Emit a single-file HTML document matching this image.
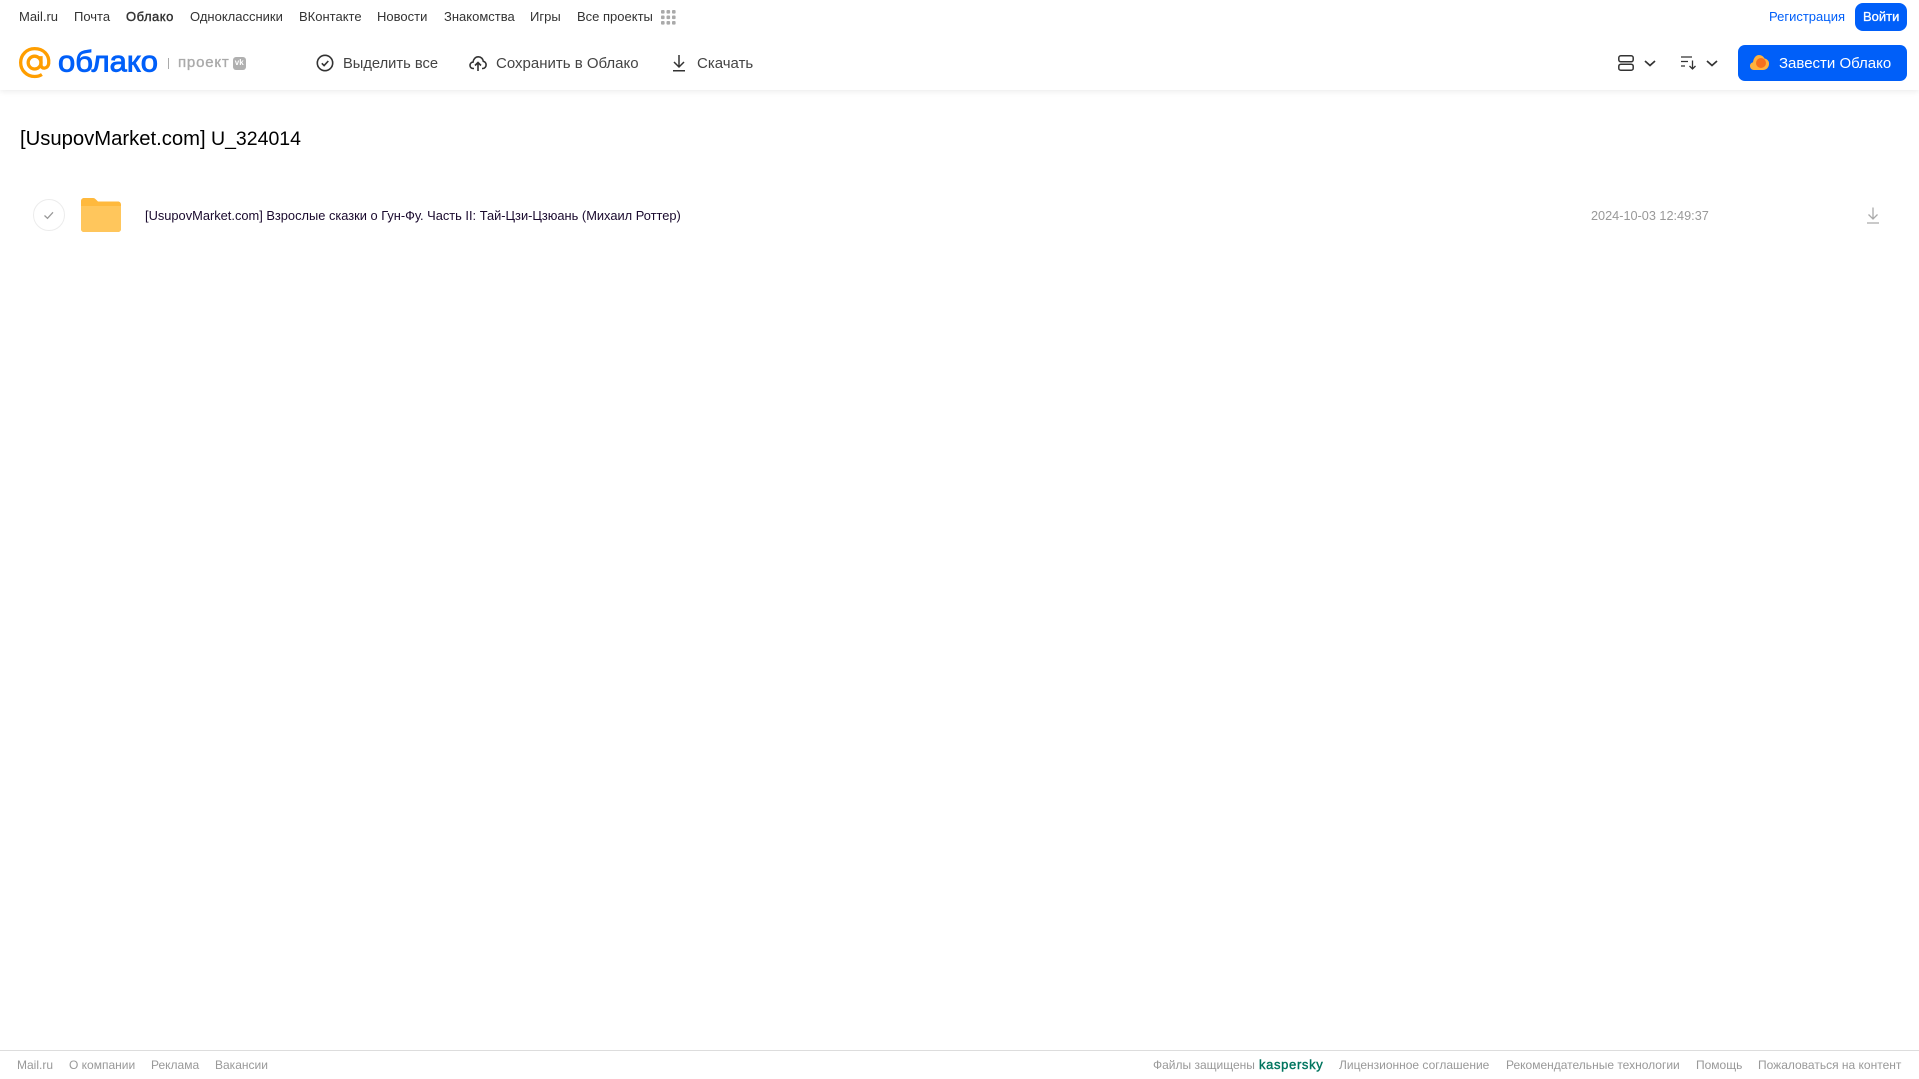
<!DOCTYPE html>
<html lang="ru"><head><meta charset="utf-8"><title>Облако</title>
<style>
html,body{margin:0;padding:0;width:1919px;height:1079px;overflow:hidden;background:#fff;font-family:"Liberation Sans",Arial,sans-serif}
.t{position:absolute;white-space:nowrap;line-height:20px}
.n{top:7px;font-size:13px;color:#333}
.b{top:53.500px;font-size:15px;color:#444;line-height:20px}
.f{top:1055px;font-size:12px;color:#999}
svg{position:absolute;overflow:visible}
#hdr{position:absolute;left:0;top:0;width:1919px;height:90px;background:#fff;box-shadow:0 1px 6px rgba(0,0,0,.09)}
</style></head><body>
<div id="hdr"></div>
<span class="t n" style="left:19px">Mail.ru</span>
<span class="t n" style="left:74px">Почта</span>
<span class="t n" style="left:126px;-webkit-text-stroke:.4px #333;letter-spacing:.5px">Облако</span>
<span class="t n" style="left:190px">Одноклассники</span>
<span class="t n" style="left:299px">ВКонтакте</span>
<span class="t n" style="left:377px">Новости</span>
<span class="t n" style="left:444px">Знакомства</span>
<span class="t n" style="left:530px">Игры</span>
<span class="t n" style="left:577px">Все проекты</span>
<svg style="left:661px;top:10px" width="15" height="15" fill="#aaa"><rect width="3.6" height="3.6" rx="1"/><rect x="5.5" width="3.6" height="3.6" rx="1"/><rect x="11" width="3.6" height="3.6" rx="1"/><rect y="5.5" width="3.6" height="3.6" rx="1"/><rect x="5.5" y="5.5" width="3.6" height="3.6" rx="1"/><rect x="11" y="5.5" width="3.6" height="3.6" rx="1"/><rect y="11" width="3.6" height="3.6" rx="1"/><rect x="5.5" y="11" width="3.6" height="3.6" rx="1"/><rect x="11" y="11" width="3.6" height="3.6" rx="1"/></svg>
<span class="t n" style="left:1769px;color:#005ff9">Регистрация</span>
<div style="position:absolute;left:1855px;top:3px;width:52px;height:28px;border-radius:8px;background:#005ff9"></div>
<span class="t n" style="left:1863px;color:#fff;font-size:13px;-webkit-text-stroke:.3px #fff">Войти</span>

<svg style="left:19px;top:47px" width="33" height="33" viewBox="0 0 36 36" fill="none" stroke="#ff9e00" stroke-width="3.6"><circle cx="17" cy="17" r="7"/><path d="M24 10v9.500c0 5 7.600 5 8.400-1.500C33.500 8.500 26.500 1.800 17 1.800 8.500 1.800 1.800 8.500 1.800 17S8.500 32.200 17 32.200c3 0 5.500-.6 8-2.200"/></svg>
<svg style="left:58px;top:42px" width="104" height="40"><text x="0" y="29.500" font-family="Liberation Sans" font-size="30" fill="#005ff9" stroke="#005ff9" stroke-width=".9" textLength="100" lengthAdjust="spacingAndGlyphs">облако</text></svg>
<div style="position:absolute;left:168px;top:58px;width:1px;height:11px;background:#aaa"></div>
<span class="t" style="left:178px;top:53px;font-size:15px;color:#aaa;-webkit-text-stroke:.35px #aaa;letter-spacing:.8px">проект</span>
<div style="position:absolute;left:233px;top:57px;width:12.500px;height:12.500px;border-radius:3px;background:#b0b0b0;color:#fff;font-size:8px;font-weight:700;line-height:12.500px;text-align:center">vk</div>

<svg style="left:316px;top:54px" width="18" height="18" viewBox="0 0 18 18" fill="none" stroke="#333" stroke-width="1.600"><circle cx="9" cy="9" r="7.700"/><path d="M5.800 9.300l2.300 2.300 4.200-4.600"/></svg>
<span class="t b" style="left:343px;font-size:14.700px">Выделить все</span>
<svg style="left:469px;top:54px" width="18" height="18" viewBox="0 0 18 18" fill="none" stroke="#333" stroke-width="1.600"><path d="M5 14.500H4.200C2.200 14.500 1 13 1 11.300c0-1.700 1.200-3 3-3.200C4.400 5 6.500 2.800 9.300 2.800c2.700 0 4.700 2 5 4.500 1.600.3 2.800 1.800 2.800 3.600 0 1.800-1.300 3.600-3.300 3.600H13"/><path d="M9 17V9M6 11.500l3-3 3 3"/></svg>
<span class="t b" style="left:496px">Сохранить в Облако</span>
<svg style="left:671px;top:54px" width="16" height="18" viewBox="0 0 16 18" fill="none" stroke="#333" stroke-width="1.500"><path d="M8 1v11.500M3 8l5 5 5-5M2 16.800h12"/></svg>
<span class="t b" style="left:697px">Скачать</span>

<svg style="left:1618px;top:55px" width="16" height="16" viewBox="0 0 16 16" fill="none" stroke="#333" stroke-width="1.500"><rect x=".8" y=".8" width="14.400" height="6" rx="2"/><rect x=".8" y="9.200" width="14.400" height="6" rx="2"/></svg>
<svg style="left:1644px;top:60px" width="12" height="7" fill="none" stroke="#333" stroke-width="1.700"><path d="M1 1l5 4.500L11 1"/></svg>
<svg style="left:1681px;top:56px" width="16" height="14" viewBox="0 0 16 14" fill="none" stroke="#333" stroke-width="1.300"><path d="M0 1h11M0 5.500h7M0 10h4M11.500 4.500V13M8.500 10l3 3 3-3"/></svg>
<svg style="left:1706px;top:60px" width="12" height="7" fill="none" stroke="#333" stroke-width="1.700"><path d="M1 1l5 4.500L11 1"/></svg>
<div style="position:absolute;left:1738px;top:45px;width:169px;height:36px;border-radius:7px;background:#005ff9"></div>
<svg style="left:1750px;top:54px" width="20" height="17" viewBox="0 0 20 17"><path d="M4 16C1.500 16 0 14 0 12c0-2 1.300-3.300 3-3.700C3.500 4 6 1 9 1c2.500 0 4.500 1.500 5.500 3.500C17.500 5 19.500 7.500 19 10.500 18.500 14 16 16 13 16z" fill="#ffb13d"/><circle cx="11" cy="9" r="5" fill="#f5701f"/></svg>
<span class="t" style="left:1779px;top:53.500px;font-size:15px;color:#fff">Завести Облако</span>

<span class="t" style="left:20px;top:127.500px;font-size:20.250px;line-height:22px;color:#000">[UsupovMarket.com]</span>
<span class="t" style="left:211px;top:127.500px;font-size:19.500px;line-height:22px;color:#000">U_324014</span>

<svg style="left:33px;top:199px" width="32" height="32" fill="none"><circle cx="16" cy="16" r="15.500" stroke="#ececec"/><path d="M11.500 16.500l3 2.800 5.500-6" stroke="#999" stroke-width="1.300"/></svg>
<svg style="left:81px;top:198px" width="40" height="34" viewBox="0 0 40 34"><path d="M0 3C0 1.300 1.300 0 3 0h9c1.500 0 2.300.8 3.200 1.800L17 3.500h20c1.700 0 3 1.300 3 3V31c0 1.700-1.300 3-3 3H3c-1.700 0-3-1.300-3-3z" fill="#ffb93d"/><path d="M0 8h40v23c0 1.700-1.300 3-3 3H3c-1.700 0-3-1.300-3-3z" fill="#ffc65c"/></svg>
<span class="t" style="left:145px;top:205.500px;font-size:12.850px;color:#1a0a2e">[UsupovMarket.com] Взрослые сказки о Гун-Фу. Часть II: Тай-Цзи-Цзюань (Михаил Роттер)</span>
<span class="t" style="left:1591px;top:205.500px;font-size:12.700px;color:#999">2024-10-03 12:49:37</span>
<svg style="left:1866px;top:207px" width="14" height="17" viewBox="0 0 14 17" fill="none" stroke="#aaa" stroke-width="1.300"><path d="M7 0.500v11M2.500 7.500L7 12l4.500-4.500M1 16h12"/></svg>

<div style="position:absolute;left:0;top:1050px;width:1919px;height:1px;background:#ddd"></div>
<span class="t f" style="left:17px">Mail.ru</span>
<span class="t f" style="left:69px">О компании</span>
<span class="t f" style="left:151px">Реклама</span>
<span class="t f" style="left:215px">Вакансии</span>
<span class="t f" style="left:1153px">Файлы защищены</span>
<span class="t f" style="left:1259px;color:#00755f;font-size:13px;-webkit-text-stroke:.4px #00755f;letter-spacing:.65px">kaspersky</span>
<span class="t f" style="left:1339px">Лицензионное соглашение</span>
<span class="t f" style="left:1506px">Рекомендательные технологии</span>
<span class="t f" style="left:1696px">Помощь</span>
<span class="t f" style="left:1758px">Пожаловаться на контент</span>
</body></html>
